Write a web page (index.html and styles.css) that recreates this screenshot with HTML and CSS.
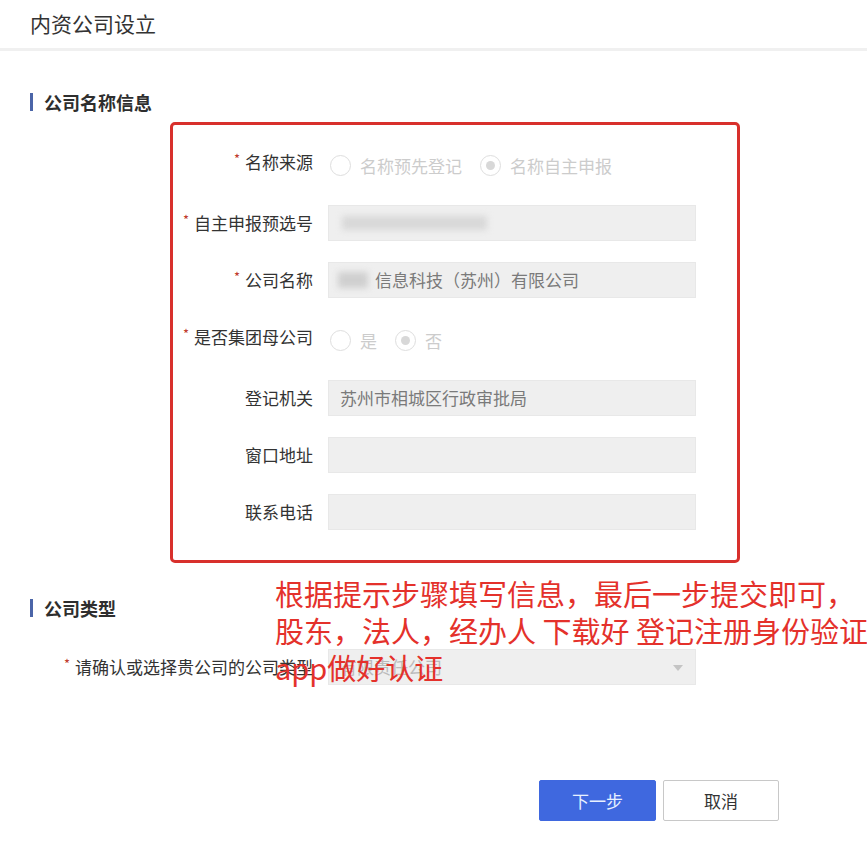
FILE: index.html
```html
<!DOCTYPE html>
<html lang="zh-CN">
<head>
<meta charset="utf-8">
<title>内资公司设立</title>
<link rel="stylesheet" href="styles.css">
</head>
<body>
<div class="page">
  <header class="header">内资公司设立</header>

  <section class="section">
    <h2 class="sec-title">公司名称信息</h2>
    <div class="box">
      <div class="row row-radio">
        <div class="label"><span class="req">*</span>名称来源</div>
        <div class="radios">
          <span class="radio"></span><span class="rtext">名称预先登记</span>
          <span class="radio on"></span><span class="rtext">名称自主申报</span>
        </div>
      </div>
      <div class="row">
        <div class="label"><span class="req">*</span>自主申报预选号</div>
        <div class="input"><span class="blur blur-long"></span></div>
      </div>
      <div class="row">
        <div class="label"><span class="req">*</span>公司名称</div>
        <div class="input"><span class="blur blur-short"></span><span class="val">信息科技（苏州）有限公司</span></div>
      </div>
      <div class="row row-radio">
        <div class="label"><span class="req">*</span>是否集团母公司</div>
        <div class="radios">
          <span class="radio"></span><span class="rtext">是</span>
          <span class="radio on"></span><span class="rtext">否</span>
        </div>
      </div>
      <div class="row">
        <div class="label">登记机关</div>
        <div class="input"><span class="val">苏州市相城区行政审批局</span></div>
      </div>
      <div class="row">
        <div class="label">窗口地址</div>
        <div class="input"></div>
      </div>
      <div class="row">
        <div class="label">联系电话</div>
        <div class="input"></div>
      </div>
    </div>
  </section>

  <section class="section section2">
    <h2 class="sec-title">公司类型</h2>
    <div class="row row-select">
      <div class="label"><span class="req">*</span>请确认或选择贵公司的公司类型</div>
      <div class="input select"><span class="val light">有限责任公司</span><span class="caret"></span></div>
    </div>
  </section>

  <div class="actions">
    <button class="btn btn-primary">下一步</button>
    <button class="btn btn-default">取消</button>
  </div>

  <div class="note">根据提示步骤填写信息，最后一步提交即可，<br>股东，法人，经办人 下载好 登记注册身份验证<br>app做好认证</div>
</div>
</body>
</html>
```

FILE: styles.css
```css
* { box-sizing: border-box; }
html, body {
  margin: 0;
  padding: 0;
  background: #fff;
}
body {
  width: 867px;
  height: 844px;
  overflow: hidden;
  font-family: "Noto Sans CJK SC", "Microsoft YaHei", "Noto Sans", sans-serif;
  color: #333;
}
.page {
  position: relative;
  width: 867px;
  height: 844px;
  overflow: hidden;
}
.header {
  height: 51px;
  padding-left: 30px;
  padding-top: 9px;
  font-size: 21px;
  line-height: 28px;
  color: #333;
  border-bottom: 3px solid #f0f0f0;
}
.section { padding: 0; }
.sec-title {
  margin: 42px 0 0 30px;
  padding-left: 11px;
  border-left: 3px solid #4b65a8;
  font-size: 18px;
  line-height: 18px;
  height: 18px;
  font-weight: bold;
  color: #2e2e2e;
}
.box {
  margin: 11px 0 0 170px;
  width: 570px;
  height: 441px;
  border: 3px solid #d8302c;
  border-radius: 5px;
  padding-top: 19px;
  display: flex;
  flex-direction: column;
  gap: 21px;
}
.row {
  display: flex;
  align-items: center;
  height: 36px;
}
.row-radio { height: 40px; align-items: flex-start; }
.label {
  width: 140px;
  flex: none;
  display: flex;
  justify-content: flex-end;
  align-items: center;
  white-space: nowrap;
  font-size: 17px;
  line-height: 36px;
  color: #333;
  margin-right: 15px;
}
.req {
  color: #c0392b;
  font-size: 13px;
  margin-right: 5px;
  position: relative;
  top: -3px;
}
.input {
  width: 368px;
  height: 36px;
  background: #efefef;
  border: 1px solid #e8e8e8;
  display: flex;
  align-items: center;
  padding-left: 11px;
  font-size: 17px;
  color: #7a7a7a;
  white-space: nowrap;
}
.val { line-height: 34px; }
.blur {
  display: inline-block;
  background: #d2d2d2;
  filter: blur(3px);
}
.blur-long { width: 145px; height: 14px; margin-left: 2px; background: #d8d8d8; }
.blur-short { width: 30px; height: 16px; margin-left: -2px; margin-right: 7px; background: #cfcfcf; }
.radios {
  display: flex;
  align-items: center;
  height: 36px;
  padding-top: 6px;
  font-size: 17px;
  color: #cccccc;
}
.radio {
  width: 21px;
  height: 21px;
  border: 1.5px solid #dedede;
  border-radius: 50%;
  margin-left: 2px;
  margin-right: 9px;
  position: relative;
  flex: none;
}
.radio.on::after {
  content: "";
  position: absolute;
  left: 50%;
  top: 50%;
  width: 9px;
  height: 9px;
  margin: -4.5px 0 0 -4.5px;
  border-radius: 50%;
  background: #d8d8d8;
}
.rtext { margin-right: 16px; }
.section2 .sec-title { margin-top: 36px; }
.row-select {
  margin-top: 32px;
  margin-left: 173px;
  height: 36px;
}
.select { position: relative; }
.light { color: #bbb; }
.caret {
  position: absolute;
  right: 12px;
  top: 15px;
  width: 0;
  height: 0;
  border-left: 5px solid transparent;
  border-right: 5px solid transparent;
  border-top: 6px solid #c4c4c4;
}
.actions {
  display: flex;
  justify-content: flex-end;
  gap: 7px;
  margin-top: 95px;
  padding-right: 88px;
}
.btn {
  width: 117px;
  height: 41px;
  font-family: inherit;
  font-size: 17px;
  border-radius: 2px;
  cursor: pointer;
}
.btn-primary {
  background: #3f68df;
  border: 1px solid #3f68df;
  color: #e8f1ff;
}
.btn-default {
  width: 116px;
  background: #fff;
  border: 1px solid #c8c8c8;
  color: #333;
}
.note {
  position: absolute;
  left: 275px;
  top: 575px;
  font-size: 29px;
  line-height: 37px;
  color: #e4312b;
  white-space: nowrap;
}
```
